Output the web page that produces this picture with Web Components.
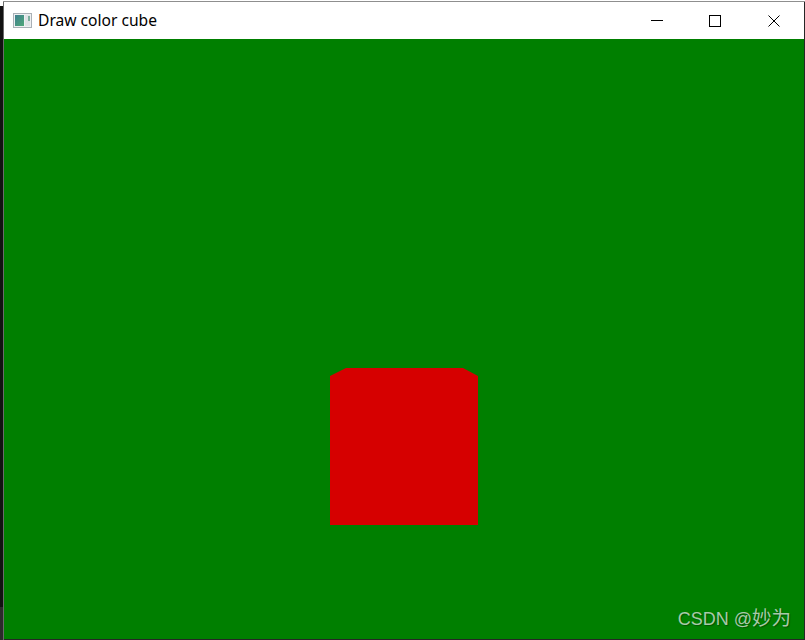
<!DOCTYPE html>
<html lang="en">
<head>
<meta charset="utf-8">
<title>Draw color cube</title>
<style>
  html, body { margin: 0; height: 100%; background: #1c1c1c; overflow: hidden; }
</style>
</head>
<body>
<app-window>
  <title-bar>Draw color cube</title-bar>
  <gl-canvas>
    <water-mark>CSDN @<span>妙为</span></water-mark>
  </gl-canvas>
</app-window>

<script>
// Ventana completa: el fondo pinta los restos del escritorio que se ven en los bordes
class AppWindow extends HTMLElement {
  constructor() {
    super();
    this.attachShadow({ mode: 'open' });
    this.shadowRoot.innerHTML = `
      <style>
        :host {
          display: flex;
          flex-direction: column;
          width: 805px;
          height: 640px;
          box-sizing: border-box;
          padding: 2px 1px 1px 4px;
          background:
            linear-gradient(#8f8f8f, #8f8f8f) 3px 1px / 100% 1px no-repeat,
            linear-gradient(#fff, #fff) 0 0 / 100% 1px no-repeat,
            linear-gradient(#fff, #fff) 0 0 / 3px 6px no-repeat,
            linear-gradient(#6a6a6a, #6a6a6a) 3px 0 / 1px 100% no-repeat,
            linear-gradient(#111 0, #111 607px, #2b2b2b 607px) 0 0 / 3px 100% no-repeat,
            #262626;
        }
      </style>
      <slot></slot>
    `;
  }
}

// Barra de titulo con icono, texto y botones
class TitleBar extends HTMLElement {
  constructor() {
    super();
    this.attachShadow({ mode: 'open' });
    this.shadowRoot.innerHTML = `
      <style>
        :host {
          display: flex;
          align-items: center;
          flex: none;
          height: 37px;
          background: #fff;
          color: #000;
          font: 15.6px "Noto Sans", "Open Sans", sans-serif;
        }
        .icon { flex: none; width: 19px; height: 15px; margin: 0 6px 0 9px; }
        .text { flex: 1; white-space: nowrap; padding-bottom: 2px; }
        .controls { display: flex; flex: none; margin-right: 1px; }
        .btn { display: flex; align-items: center; justify-content: center; width: 58px; height: 37px; }
        .max { margin-right: 1px; }
        svg { display: block; shape-rendering: crispEdges; }
        .icon { shape-rendering: auto; }
      </style>
      <svg class="icon" viewBox="0 0 19 15">
        <defs>
          <linearGradient id="g" x1="0" y1="0" x2="1" y2="1">
            <stop offset="0" stop-color="#3f7f8f"/>
            <stop offset="1" stop-color="#4fa878"/>
          </linearGradient>
        </defs>
        <rect x=".5" y=".5" width="18" height="14" fill="#eef0f2" stroke="#a9b0b6"/>
        <rect x="2" y="2" width="9" height="11" fill="url(#g)"/>
        <rect x="12" y="2" width="5" height="11" fill="#dfe3e6"/>
        <rect x="15" y="3" width="2" height="5" fill="#7fb0a0"/>
      </svg>
      <span class="text"><slot></slot></span>
      <div class="controls">
        <div class="btn">
          <svg width="12" height="12" viewBox="0 0 12 12"><rect x="0" y="5" width="12" height="1" fill="#000"/></svg>
        </div>
        <div class="btn max">
          <svg width="12" height="12" viewBox="0 0 12 12"><rect x=".5" y=".5" width="11" height="11" fill="none" stroke="#000"/></svg>
        </div>
        <div class="btn">
          <svg style="shape-rendering:auto" width="12" height="12" viewBox="0 0 12 12"><path d="M.5 .5 11.5 11.5M11.5 .5 .5 11.5" fill="none" stroke="#000"/></svg>
        </div>
      </div>
    `;
  }
}

// Zona de dibujo: fondo verde y la cara roja del cubo
class GlCanvas extends HTMLElement {
  constructor() {
    super();
    this.attachShadow({ mode: 'open' });
    this.shadowRoot.innerHTML = `
      <style>
        :host { display: block; position: relative; flex: 1; background: #007f00; overflow: hidden; }
        svg { position: absolute; left: 0; top: 0; width: 800px; height: 600px; }
      </style>
      <!-- coordenadas: x-4, y-39 respecto a la captura -->
      <svg viewBox="0 0 800 600">
        <polygon fill="#d60000" points="326,337 342,329 459,329 474,337 474,486 326,486"/>
      </svg>
      <slot></slot>
    `;
  }
}

// Marca de agua sobre el lienzo
class WaterMark extends HTMLElement {
  constructor() {
    super();
    this.attachShadow({ mode: 'open' });
    this.shadowRoot.innerHTML = `
      <style>
        :host {
          position: absolute;
          right: 13px;
          bottom: 8px;
          color: #a9c9a9;
          font: 18px "Liberation Sans", "Noto Sans CJK SC", sans-serif;
          line-height: 24px;
          white-space: nowrap;
          text-shadow: 1px 1px 1px #005500;
        }
        ::slotted(span) { font-size: 19.5px; }
      </style>
      <slot></slot>
    `;
  }
}

customElements.define('app-window', AppWindow);
customElements.define('title-bar', TitleBar);
customElements.define('gl-canvas', GlCanvas);
customElements.define('water-mark', WaterMark);
</script>
</body>
</html>
